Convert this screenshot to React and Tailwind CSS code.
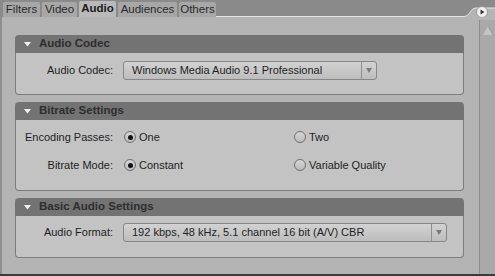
import React from "react";

const font = { fontFamily: '"Liberation Sans", Arial, sans-serif' };

function Tab({ label, active, w }) {
  return (
    <div
      className={
        active
          ? "h-[16px] flex items-center justify-center bg-[#b9b9b9] text-[11.5px] font-bold text-[#1a1a1a] rounded-t-[2px]"
          : "h-[15px] flex items-center justify-center bg-[#a7a7a7] text-[11.5px] text-[#2a2a2a] rounded-t-[2px]"
      }
      style={{ width: w }}
    >
      {label}
    </div>
  );
}

function Panel({ title, children, bodyClass }) {
  return (
    <div className="w-[449px] flex flex-col">
      <div className="h-[18px] bg-[#737373] rounded-t-[4px] flex items-center pl-[9px] gap-[8px]">
        <svg width="7" height="5" viewBox="0 0 7 5">
          <path d="M0 0 L7 0 L3.5 4.5 Z" fill="#f2f2f2" />
        </svg>
        <span className="text-[11.5px] font-bold text-[#2e2e2e]">{title}</span>
      </div>
      <div
        className={
          "bg-[#c3c3c3] border border-t-0 border-[#7c7c7c] rounded-b-[4px] " +
          bodyClass
        }
      >
        {children}
      </div>
    </div>
  );
}

function Label({ children }) {
  return (
    <div className="w-[97px] text-right text-[11px] text-[#1e1e1e] shrink-0">
      {children}
    </div>
  );
}

function Dropdown({ value, width }) {
  return (
    <div
      className="flex h-[19px] rounded-[3px] border border-[#878787] bg-gradient-to-b from-[#d2d2d2] to-[#bdbdbd] overflow-hidden"
      style={{ width }}
    >
      <div className="flex-1 flex items-center pl-[8px] text-[11px] text-[#1e1e1e]">
        {value}
      </div>
      <div className="w-[15px] border-l border-[#8e8e8e] flex items-center justify-center">
        <svg width="6" height="5" viewBox="0 0 6 5">
          <path d="M0 0 L6 0 L3 5 Z" fill="#7a7a7a" />
        </svg>
      </div>
    </div>
  );
}

function Radio({ checked, label }) {
  return (
    <div className="flex items-center gap-[3px] text-[11px] text-[#1e1e1e]">
      <div className="w-[12px] h-[12px] rounded-full border border-[#6f6f6f] bg-gradient-to-b from-[#d6d6d6] to-[#bcbcbc] flex items-center justify-center">
        {checked && <div className="w-[5px] h-[5px] rounded-full bg-[#111]" />}
      </div>
      <span>{label}</span>
    </div>
  );
}

export default function App() {
  return (
    <div
      className="w-[495px] h-[276px] flex flex-col bg-[#8a8a8a] overflow-hidden"
      style={font}
    >
      {/* tab strip */}
      <div className="h-[17px] flex items-end shrink-0">
        <div className="flex items-end gap-[2px] pl-[3px]">
          <Tab label="Filters" w={37} />
          <Tab label="Video" w={35} />
          <Tab label="Audio" w={37} active />
          <Tab label="Audiences" w={59} />
          <Tab label="Others" w={37} />
        </div>
        <div className="flex-1 h-full border-b border-[#e6e6e6]" />
        <div className="relative w-[33px] h-full shrink-0">
          <svg width="33" height="17" viewBox="0 0 33 17" className="absolute inset-0">
            <path d="M0 16.5 L2 16.5 C8 16.5 8 8 14 8 L33 8 L33 17 L0 17 Z" fill="#b4b4b4" />
            <path d="M0 16.5 L2 16.5 C8 16.5 8 8 14 8 L33 8" fill="none" stroke="#e6e6e6" strokeWidth="1" />
            <circle cx="20" cy="12" r="5.5" fill="#f0f0f0" stroke="#8a8a8a" strokeWidth="0.8" />
            <path d="M18.5 9.5 L22.5 12 L18.5 14.5 Z" fill="#3a3a3a" />
          </svg>
        </div>
      </div>

      {/* body */}
      <div className="flex-1 flex border-b-2 border-[#3c3c3c] bg-[#b4b4b4]">
        <div className="flex-1 border-l-2 border-[#8e8e8e] pl-[13px] pt-[18px] flex flex-col gap-[7px]">
          <Panel title="Audio Codec" bodyClass="h-[42px] pt-[8px]">
            <div className="flex items-center gap-[10px]">
              <Label>Audio Codec:</Label>
              <Dropdown value="Windows Media Audio 9.1 Professional" width={254} />
            </div>
          </Panel>

          <Panel title="Bitrate Settings" bodyClass="h-[71px] pt-[8px] flex flex-col gap-[10px]">
            <div className="flex items-center gap-[10px] h-[18px]">
              <Label>Encoding Passes:</Label>
              <div className="w-[161px] pl-[1px]">
                <Radio checked label="One" />
              </div>
              <Radio label="Two" />
            </div>
            <div className="flex items-center gap-[10px] h-[18px]">
              <Label>Bitrate Mode:</Label>
              <div className="w-[161px] pl-[1px]">
                <Radio checked label="Constant" />
              </div>
              <Radio label="Variable Quality" />
            </div>
          </Panel>

          <Panel title="Basic Audio Settings" bodyClass="h-[42px] pt-[7px]">
            <div className="flex items-center gap-[10px]">
              <Label>Audio Format:</Label>
              <Dropdown value="192 kbps, 48 kHz, 5.1 channel 16 bit (A/V) CBR" width={324} />
            </div>
          </Panel>
        </div>

        {/* scrollbar */}
        <div className="w-[16px] border-l border-[#8c8c8c] bg-[#a9a9a9] flex flex-col items-center pt-[6px] mt-[3px]">
          <svg width="10" height="9" viewBox="0 0 10 9">
            <path d="M5 0 L10 9 L0 9 Z" fill="#c4c4c4" />
            <path d="M5 0 L10 9" stroke="#939393" strokeWidth="0.8" />
          </svg>
        </div>
      </div>
    </div>
  );
}
